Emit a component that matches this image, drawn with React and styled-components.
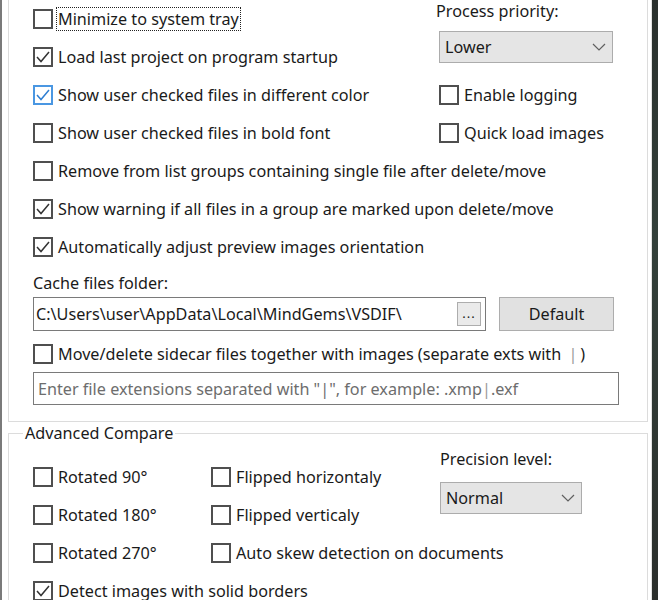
import React from "react";
import styled, { createGlobalStyle } from "styled-components";

const GlobalStyle = createGlobalStyle`
  html, body {
    margin: 0;
    padding: 0;
    background: #ffffff;
    overflow: hidden;
  }
  body {
    font-family: "Noto Sans", "Open Sans", sans-serif;
    font-size: 16.2px;
    color: #1a1a1a;
  }
`;

const Frame = styled.div`
  display: flex;
  width: 658px;
  height: 600px;
  overflow: hidden;
`;

const Panel = styled.div`
  flex: 1;
  display: flex;
  flex-direction: column;
  border-left: 2px solid #7a7a7a;
  padding: 0 3px 0 6px;
  background: #ffffff;
`;

const EdgeStrip = styled.div`
  width: 6px;
  border-left: 1px solid #e2e2e2;
  background: linear-gradient(180deg, #2a302d 0%, #33403a 40%, #2b2f2c 100%);
`;

const GroupBox = styled.div`
  display: flex;
  flex-direction: column;
  gap: 14px;
  border: 1px solid #dcdcdc;
  border-top: none;
  padding: 0 0 16px 24px;
`;

const FieldSet = styled.fieldset`
  margin: 1px 0 0;
  border: 1px solid #dcdcdc;
  padding: 5px 0 0 24px;
  min-width: 0;
`;

const Legend = styled.legend`
  margin-left: -10px;
  padding: 0 2px;
  line-height: 20px;
`;

const TopSection = styled.div`
  display: grid;
  grid-template-columns: 406px 1fr;
`;

const Stack = styled.div`
  display: flex;
  flex-direction: column;
  gap: 14px;
  padding-top: ${(p) => p.$top || 0}px;
`;

const SideStack = styled.div`
  display: flex;
  flex-direction: column;
  padding-top: ${(p) => p.$top || 0}px;
`;

const SideChecks = styled.div`
  display: flex;
  flex-direction: column;
  gap: 14px;
  margin-top: 20px;
`;

const FieldLabel = styled.div`
  line-height: 20px;
  white-space: nowrap;
  margin-left: ${(p) => p.$shift || 0}px;
`;

const CheckRow = styled.label`
  display: flex;
  align-items: center;
  gap: 5px;
  height: 24px;
  white-space: nowrap;
`;

const Box = styled.span`
  box-sizing: border-box;
  width: 20px;
  height: 20px;
  flex-shrink: 0;
  display: flex;
  align-items: center;
  justify-content: center;
  background: #ffffff;
  border: 2px solid ${(p) => (p.$accent ? "#4a97e2" : "#4f4f4f")};
`;

const LabelText = styled.span`
  line-height: 22px;
  padding: 0 1px;
  margin-left: -1px;
  outline: ${(p) => (p.$focused ? "1px dotted #222" : "none")};
  outline-offset: 0;
`;

const Combo = styled.div`
  box-sizing: border-box;
  width: ${(p) => p.$width}px;
  height: 32px;
  margin-top: ${(p) => p.$gap}px;
  display: flex;
  align-items: center;
  justify-content: space-between;
  padding: 0 6px 0 5px;
  background: #e5e5e5;
  border: 1px solid #acacac;
`;

const CacheBlock = styled.div`
  display: flex;
  flex-direction: column;
  gap: 4px;
`;

const PathRow = styled.div`
  display: flex;
  gap: 13px;
  align-items: center;
`;

const PathField = styled.div`
  box-sizing: border-box;
  width: 453px;
  height: 34px;
  display: flex;
  align-items: center;
  padding: 0 4px 0 2px;
  border: 1px solid #7a7a7a;
  background: #ffffff;
`;

const PathText = styled.span`
  flex: 1;
  white-space: nowrap;
  overflow: hidden;
`;

const BrowseButton = styled.div`
  box-sizing: border-box;
  width: 24px;
  height: 24px;
  display: flex;
  align-items: center;
  justify-content: center;
  border: 1px solid #adadad;
  background: #eaeaea;
  font-size: 13px;
  letter-spacing: 1px;
  padding-bottom: 2px;
`;

const PushButton = styled.div`
  box-sizing: border-box;
  width: 115px;
  height: 34px;
  display: flex;
  align-items: center;
  justify-content: center;
  border: 1px solid #adadad;
  background: #e1e1e1;
`;

const SidecarBlock = styled.div`
  display: flex;
  flex-direction: column;
  gap: 6px;
  margin-top: -3px;
`;

const ExtField = styled.div`
  box-sizing: border-box;
  width: 586px;
  height: 33px;
  display: flex;
  align-items: center;
  padding-left: 4px;
  border: 1px solid #7a7a7a;
  color: #6d6d6d;
  white-space: nowrap;
`;

const Pipe = styled.span`
  color: #9a9a9a;
  margin: 0 ${(p) => p.$space || 0}px;
`;

const CompareGrid = styled.div`
  display: grid;
  grid-template-columns: 178px 229px 1fr;
`;

const CheckMark = ({ accent }) => (
  <svg width="16" height="16" viewBox="0 0 16 16">
    <polyline
      points="2,8 6,12.5 14,3"
      fill="none"
      stroke={accent ? "#2f7fd2" : "#333333"}
      strokeWidth="1.5"
    />
  </svg>
);

const Chevron = () => (
  <svg width="14" height="8" viewBox="0 0 14 8">
    <polyline points="1,1 7,7 13,1" fill="none" stroke="#606060" strokeWidth="1.2" />
  </svg>
);

const Check = ({ checked, accent, focused, children }) => (
  <CheckRow>
    <Box $accent={accent}>{checked && <CheckMark accent={accent} />}</Box>
    <LabelText $focused={focused}>{children}</LabelText>
  </CheckRow>
);

const App = () => (
  <>
    <GlobalStyle />
    <Frame>
      <Panel>
        <GroupBox>
          <TopSection>
            <Stack $top={7}>
              <Check focused>Minimize to system tray</Check>
              <Check checked>Load last project on program startup</Check>
              <Check checked accent>
                Show user checked files in different color
              </Check>
              <Check>Show user checked files in bold font</Check>
            </Stack>
            <SideStack $top={1}>
              <FieldLabel $shift={-3}>Process priority:</FieldLabel>
              <Combo $width={174} $gap={10}>
                <span>Lower</span>
                <Chevron />
              </Combo>
              <SideChecks>
                <Check>Enable logging</Check>
                <Check>Quick load images</Check>
              </SideChecks>
            </SideStack>
          </TopSection>
          <Check>Remove from list groups containing single file after delete/move</Check>
          <Check checked>Show warning if all files in a group are marked upon delete/move</Check>
          <Check checked>Automatically adjust preview images orientation</Check>
          <CacheBlock>
            <FieldLabel>Cache files folder:</FieldLabel>
            <PathRow>
              <PathField>
                <PathText>C:\Users\user\AppData\Local\MindGems\VSDIF\</PathText>
                <BrowseButton>...</BrowseButton>
              </PathField>
              <PushButton>Default</PushButton>
            </PathRow>
          </CacheBlock>
          <SidecarBlock>
            <Check>
              Move/delete sidecar files together with images (separate exts with
              <Pipe $space={3}> |</Pipe>)
            </Check>
            <ExtField>
              Enter file extensions separated with "|", for example: .xmp<Pipe>|</Pipe>.exf
            </ExtField>
          </SidecarBlock>
        </GroupBox>
        <FieldSet>
          <Legend>Advanced Compare</Legend>
          <CompareGrid>
            <Stack $top={17}>
              <Check>Rotated 90°</Check>
              <Check>Rotated 180°</Check>
              <Check>Rotated 270°</Check>
              <Check checked>Detect images with solid borders</Check>
            </Stack>
            <Stack $top={17}>
              <Check>Flipped horizontaly</Check>
              <Check>Flipped verticaly</Check>
              <Check>Auto skew detection on documents</Check>
            </Stack>
            <SideStack $top={1}>
              <FieldLabel>Precision level:</FieldLabel>
              <Combo $width={142} $gap={13}>
                <span>Normal</span>
                <Chevron />
              </Combo>
            </SideStack>
          </CompareGrid>
        </FieldSet>
      </Panel>
      <EdgeStrip />
    </Frame>
  </>
);

export default App;
